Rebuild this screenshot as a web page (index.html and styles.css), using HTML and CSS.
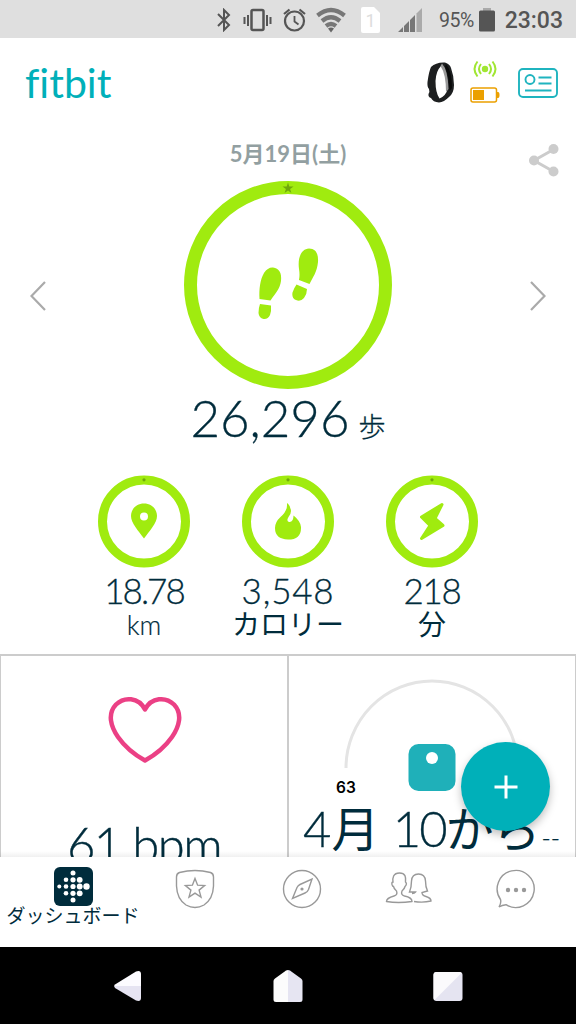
FILE: index.html
```
<!DOCTYPE html>
<html lang="ja">
<head>
  <meta charset="UTF-8">
  <meta name="viewport" content="width=device-width, initial-scale=1.0">
  <title>Fitbit</title>
  <link rel="stylesheet" href="styles.css">
</head>
<body>
  <div class="status-bar">
    <svg class="s-bt" width="14" height="24" viewBox="0 0 14 24" fill="none" stroke="#555" stroke-width="2"><path d="M1 6L12 17L7 22V2L12 7L1 18"/></svg>
    <svg class="s-vib" width="29" height="24" viewBox="0 0 29 24" fill="none" stroke="#555" stroke-width="2"><rect x="8.500" y="2" width="12" height="20" rx="1.500" stroke-width="2.500"/><path d="M1.500 9v7M5 7v11M24 7v11M27.500 9v7"/></svg>
    <svg class="s-alarm" width="23" height="24" viewBox="0 0 23 24" fill="none" stroke="#555" stroke-width="2.200"><circle cx="11.500" cy="13" r="9.500"/><path d="M1 6L6.500 1.500M22 6L16.500 1.500"/><path d="M11.500 8v5.500l4 3" stroke-width="1.800"/></svg>
    <svg class="s-wifi" width="30" height="26" viewBox="0 0 30 26" fill="none" stroke="#777" stroke-width="4.300"><path d="M1.500 8.500Q15-2.500 28.500 8.500"/><path d="M6 14Q15 6.500 24 14"/><path d="M10 19Q15 15 20 19"/><path d="M12 21.500Q15 19.500 18 21.500L15 25.500z" fill="#666" stroke="none"/></svg>
    <svg class="s-sim" width="19" height="26" viewBox="0 0 19 26"><path d="M2 0h11l6 6v18q0 2-2 2H2q-2 0-2-2V2q0-2 2-2z" fill="#fff"/><text x="9.500" y="20" text-anchor="middle" class="sim-num">1</text></svg>
    <svg class="s-signal" width="24" height="24" viewBox="0 0 24 24" fill="#777"><path d="M0 24L5 19v5zM6 18l5-5v11H6zM12 12l5-5v17h-5z"/><path d="M18.500 5.500L24 0v24h-5.500z" fill="#aaa"/></svg>
    <span class="s-percent">95%</span>
    <svg class="s-battery" width="16" height="24" viewBox="0 0 16 24"><path d="M4 0h8v3H4z" fill="#aaa"/><rect y="2.500" width="16" height="21" rx="1.500" fill="#555"/></svg>
    <span class="s-clock">23:03</span>
  </div>

  <div class="dashboard">
    <div class="header">
      <div class="logo">fitbit</div>
      <svg class="device" width="28" height="41" viewBox="0 0 28 41"><path fill-rule="evenodd" d="M4 5Q9 0 18 .5Q23 2 24 6Q27 14 27 23Q27 31 22 35Q17 40 12 40.500Q6 40 4 36Q1 35 1.500 32Q3 30 2 27Q0 25 .5 20Q2 9 4 5zM14 4Q9 9 8.500 19Q8.500 31 12.500 36.500Q19 34 21 26Q20 10 14 4z" fill="#1d1f20"/><path d="M15 1.500Q21 8 21.500 27L19 30Q19 12 13.500 4z" fill="#999"/><path d="M19 2Q25 9 25 26L22.500 29Q22 14 18 5z" fill="#090a0a"/></svg>
      <div class="sync">
        <svg width="24" height="18" viewBox="0 0 24 18" fill="none" stroke="#a0e632" stroke-width="2"><circle cx="12" cy="9" r="3.200" fill="#a0e632" stroke="none"/><path d="M4.500 1.500Q-1.500 9 4.500 16.500M8 4Q4 9 8 14M19.500 1.500Q25.500 9 19.500 16.500M16 4Q20 9 16 14"/></svg>
        <svg width="30" height="16" viewBox="0 0 30 16"><rect x="1" y="1" width="25.500" height="14" rx="2" fill="none" stroke="#eba000" stroke-width="1.500"/><rect x="3" y="3" width="11" height="10" fill="#eba000"/><path d="M27 5h1q1.500 0 1.500 3T28 11h-1z" fill="#eba000"/></svg>
      </div>
      <svg class="account" width="40" height="30" viewBox="0 0 40 30" fill="none" stroke="#1fb4bf" stroke-width="1.900"><rect x="1" y="1" width="38" height="28" rx="4"/><circle cx="12" cy="11.500" r="4.500"/><path d="M20.500 9.500h13M20.500 15.500h13M7 22.500h26.500"/></svg>
    </div>

    <div class="date-row">
      <span class="date">5月19日(土)</span>
      <svg class="share" width="30" height="33" viewBox="0 0 30 33" fill="#ccc"><path d="M24.500 5.500L5 16.500L24.500 27.500" fill="none" stroke="#ccc" stroke-width="3"/><circle cx="24.500" cy="5" r="5"/><circle cx="5" cy="16.500" r="5"/><circle cx="24.500" cy="27.500" r="5"/></svg>
    </div>

    <div class="steps-row">
      <svg width="16" height="30" viewBox="0 0 16 30" fill="none" stroke="#aaa" stroke-width="2.200"><path d="M15 1L1.500 15L15 29"/></svg>
      <svg width="208" height="208" viewBox="0 0 208 208" fill="#a0eb0f">
        <circle cx="104" cy="104" r="97.500" fill="none" stroke="#a0eb0f" stroke-width="13"/>
        <path d="M104 1.500l1.300 4h4.200l-3.400 2.500l1.300 4l-3.400-2.500l-3.400 2.500l1.300-4l-3.400-2.500h4.200z" fill="#6fa80c"/>
        <path d="M89 86.500C95 87 98 92 97 100C96 108 91 113 86.500 119.500L75.500 118C75 108 76 99 80 92Q84 86 89 86.500zM76 123l11 1.500Q87.500 130 86 134Q84 138.500 79.500 138Q75 137 74.500 132Q74.500 127 76 123z"/>
        <path d="M125 67.500C132 67.500 134.500 73 134 81C133 91 129 96 125.500 103L115 99Q116 94 115 88C113.500 77 117 68 125 67.500zM112.500 103.500l10.500 4.500Q123 113 120 117Q116.500 121 112 119Q107.500 117 108.500 111.500Q110 107 112.500 103.500z"/>
      </svg>
      <svg width="16" height="30" viewBox="0 0 16 30" fill="none" stroke="#aaa" stroke-width="2.200"><path d="M1 1L14.500 15L1 29"/></svg>
    </div>
    <div class="steps">26,296<span class="steps-unit">歩</span></div>

    <div class="goals">
      <div class="goal">
        <svg width="92" height="93" viewBox="0 0 92 93" fill="#a0eb0f"><circle cx="46" cy="46.500" r="41.500" fill="none" stroke="#a0eb0f" stroke-width="9"/><circle cx="46" cy="4.800" r="1.600" fill="#6fa80c"/><path fill-rule="evenodd" d="M46 28.500C53.500 28.500 59 34 59 41C59 48 51.500 56 46 63.500C40.500 56 33 48 33 41C33 34 38.500 28.500 46 28.500zM46 37.500a4 4 0 1 0 0 8a4 4 0 1 0 0-8z"/></svg>
        <span class="goal-value distance">18.78</span>
        <span class="goal-unit latin">km</span>
      </div>
      <div class="goal">
        <svg width="92" height="93" viewBox="0 0 92 93" fill="#a0eb0f"><circle cx="46" cy="46.500" r="41.500" fill="none" stroke="#a0eb0f" stroke-width="9"/><circle cx="46" cy="4.800" r="1.600" fill="#6fa80c"/><path d="M45.500 28Q48.500 31 49 36Q49 39 46.500 42Q44 46 47 47Q51.500 47.500 51.500 40.500Q58.500 46 59 52Q59.500 64.500 46 64.500Q33 64 33 53Q33 47 38.500 42Q45.500 36 45 29z"/></svg>
        <span class="goal-value calories">3,548</span>
        <span class="goal-unit">カロリー</span>
      </div>
      <div class="goal">
        <svg width="92" height="93" viewBox="0 0 92 93" fill="#a0eb0f"><circle cx="46" cy="46.500" r="41.500" fill="none" stroke="#a0eb0f" stroke-width="9"/><circle cx="46" cy="4.800" r="1.600" fill="#6fa80c"/><path d="M56 29.500L35.500 42L44 50.500L35.500 63.500L57 50.500L49 43.500z" stroke="#a0eb0f" stroke-width="3" stroke-linejoin="round"/></svg>
        <span class="goal-value">218</span>
        <span class="goal-unit">分</span>
      </div>
    </div>

    <div class="tiles">
      <div class="tile heart-tile">
        <svg width="74" height="68" viewBox="0 0 74 68" fill="none" stroke="#eb4085" stroke-width="4.500" stroke-linejoin="round"><path d="M37 13.500C30.500 1 16 .5 8 8.500C-1 18 3 31 10 41C17 51 27 59 37 64.500C47 59 57 51 64 41C71 31 75 18 66 8.500C58 .5 43.500 1 37 13.500z"/></svg>
        <div class="tile-value">61 bpm</div>
      </div>
      <div class="tile weight-tile">
        <svg width="176" height="114" viewBox="0 0 176 114"><path d="M2 89A86 87 0 0 1 174 89" fill="none" stroke="#e4e4e4" stroke-width="3"/><rect x="64.500" y="65" width="47" height="47" rx="10" fill="#1fb0b9"/><circle cx="88" cy="79" r="6" fill="#fff"/></svg>
        <span class="weight-start">63</span>
        <div class="weight-value">4<b class="kanji">月</b> <span class="ten">10</span><b class="kana">から</b><span class="dash">--</span></div>
      </div>
    </div>
    <div class="fab"><svg width="24" height="24" viewBox="0 0 24 24" stroke="#fff" stroke-width="3"><path d="M12 .5v23M.5 12h23"/></svg></div>
  </div>

  <div class="tab-bar">
    <div class="tab active">
      <svg width="39" height="39" viewBox="0 0 39 39" fill="#fff"><rect width="39" height="39" rx="6" fill="#002c3c"/><circle cx="19" cy="6" r="2.500"/><circle cx="12" cy="12.800" r="2.300"/><circle cx="19" cy="12.800" r="2.600"/><circle cx="25.700" cy="12.800" r="2.900"/><circle cx="5.300" cy="19.500" r="2"/><circle cx="12" cy="19.500" r="2.300"/><circle cx="19" cy="19.500" r="2.600"/><circle cx="25.700" cy="19.500" r="2.900"/><circle cx="32.500" cy="19.500" r="3.200"/><circle cx="12" cy="26.300" r="2.300"/><circle cx="19" cy="26.300" r="2.600"/><circle cx="25.700" cy="26.300" r="2.900"/><circle cx="19" cy="33" r="2.500"/></svg>
      <span>ダッシュボード</span>
    </div>
    <div class="tab"><svg width="40" height="40" viewBox="0 0 40 40"><path d="M4.500 3.500Q20-.5 35.500 3.500Q38.500 4.500 38.500 8V17Q38 30 29 36Q20 41 11 36Q2 30 1.500 17V8Q1.500 4.500 4.500 3.500z"/><path d="M20 9.500l2.600 6.700l7 .4l-5.500 4.500l1.900 7l-6-4l-6 4l1.900-7l-5.500-4.500l7-.4z"/></svg></div>
    <div class="tab"><svg width="40" height="40" viewBox="0 0 40 40"><circle cx="20" cy="20" r="18.500"/><path d="M30 10L26.500 20.500Q25.500 23 23 24L10.500 29.500L15 18.500Q16 16.500 18 15.500z"/><circle cx="20" cy="20" r="1.600" class="dot"/></svg></div>
    <div class="tab"><svg width="48" height="40" viewBox="0 0 48 40"><path d="M14.500 4C8 4 7.500 9 8 13Q6.500 13 7 15.500Q7.500 17.500 8.500 17.500Q9 20 11.500 22Q13 26 9 27Q1.500 29 1.500 32.500Q13 34.500 27 32.500Q27 28.500 19.500 27Q15.500 26 17 22Q19.500 20 20 17.500Q22.500 15 20.500 13C21 8 20.500 4 14.500 4z"/><path d="M27 24.500Q29.500 24.500 30.500 23H24.500Q26.500 18 26.500 12Q27 5 33.500 5Q40 5 40.500 12Q40.500 18 42.500 22L37 23.500Q37 26.500 41 27.500Q46 29 46 32Q38 34 29 32.500"/></svg></div>
    <div class="tab"><svg width="40" height="40" viewBox="0 0 40 40"><path d="M4.500 30.500A18.500 18.500 0 1 1 10 35.700Q6 36 3 38Q5.500 34 4.500 30.500z"/><g class="dot"><circle cx="12" cy="21" r="2.200"/><circle cx="20" cy="21" r="2.200"/><circle cx="28" cy="21" r="2.200"/></g></svg></div>
  </div>

  <div class="nav-bar">
    <svg width="30" height="32" viewBox="0 0 30 32"><path d="M2 14.500L23 1.500Q28 0 28 4V16H1z" fill="#fcfbff"/><path d="M1 16H28V28Q28 32 23 30.500L2 18z" fill="#e6e4f2"/></svg>
    <svg width="30" height="32" viewBox="0 0 30 32"><path d="M15 0Q13 0 11 2L2 8.500Q.5 9.500 .5 11V29.500Q.5 32 3 32H15z" fill="#fcfcfc"/><path d="M15 0Q17 0 19 2L28 8.500Q29.500 9.500 29.500 11V29.500Q29.500 32 27 32H15z" fill="#e6e5f2"/></svg>
    <svg width="30" height="32" viewBox="0 0 30 32"><rect x=".5" y="2" width="29" height="29" rx="3" fill="#e5e4f1"/><path d="M28.500 3L1.500 30Q.5 29.500 .5 28V5Q.5 2 3.500 2H26Q28 2 28.500 3z" fill="#fbfafc"/></svg>
  </div>
</body>
</html>
```
FILE: styles.css
```
* {
  box-sizing: border-box;
}
body {
  margin: 0;
  width: 576px;
  height: 1024px;
  display: flex;
  flex-direction: column;
  overflow: hidden;
  background: #fff;
  color: #002c3c;
  font-family: Lato, "Noto Sans CJK JP", sans-serif;
}
svg {
  display: block;
  flex-shrink: 0;
}

/* status bar */
.status-bar {
  height: 38px;
  padding: 2px 13px 0 217px;
  display: flex;
  align-items: center;
  background: #dfdfdf;
  color: #555;
  font-family: Roboto, sans-serif;
}
.s-vib {
  margin-left: 12px;
}
.s-alarm {
  margin-left: 11px;
}
.s-wifi {
  margin-left: 10px;
}
.s-sim {
  margin-left: 15px;
}
.sim-num {
  font-size: 18px;
  fill: #ddd;
}
.s-signal {
  margin-left: 18px;
}
.s-percent {
  width: 40px;
  margin-left: 17px;
  font-size: 19.5px;
  letter-spacing: -0.5px;
}
.s-battery {
  margin-left: 1px;
}
.s-clock {
  margin-left: 10px;
  font-size: 23px;
  font-weight: 500;
}

/* dashboard */
.dashboard {
  position: relative;
  height: 819px;
  overflow: hidden;
}
.dashboard::after {
  content: "";
  position: absolute;
  left: 0;
  right: 0;
  bottom: 0;
  height: 6px;
  background: linear-gradient(rgba(0,0,0,0), rgba(0,0,0,0.06));
}
.header {
  height: 90px;
  padding: 0 18px 0 25px;
  display: flex;
  align-items: center;
}
.logo {
  flex: 1;
  color: #00b0b9;
  font-size: 41px;
  line-height: 50px;
  font-variant-ligatures: none;
}
.device {
  margin-bottom: 2px;
}
.sync {
  width: 30px;
  margin: 0 18px 3px 15px;
  display: flex;
  flex-direction: column;
  align-items: center;
  gap: 9px;
}
.date-row {
  height: 53px;
  padding: 0 17px;
  display: grid;
  grid-template-columns: 1fr auto 1fr;
  align-items: center;
}
.date {
  grid-column: 2;
  padding-bottom: 5px;
  color: #929fa1;
  font-size: 22px;
  font-weight: bold;
}
.share {
  justify-self: end;
  margin-top: 11px;
}
.steps-row {
  height: 208px;
  padding: 0 30px;
  display: flex;
  align-items: center;
  justify-content: space-between;
}
.steps-row svg:first-child,
.steps-row svg:last-child {
  margin-top: 21px;
}
.steps {
  height: 86px;
  line-height: 58px;
  text-align: center;
  font-size: 51px;
  font-weight: 300;
  -webkit-text-stroke: 0.3px;
}
.steps-unit {
  margin-left: 9px;
  font-size: 27px;
}
.goals {
  height: 179px;
  padding: 0 72px;
  display: grid;
  grid-template-columns: repeat(3, 1fr);
}
.goal {
  display: flex;
  flex-direction: column;
  align-items: center;
}
.goal-value {
  height: 44px;
  line-height: 44px;
  font-size: 35px;
  font-weight: 300;
  letter-spacing: -1.3px;
  -webkit-text-stroke: 0.3px;
}
.goal-value.distance {
  letter-spacing: -2px;
}
.goal-value.calories {
  letter-spacing: 0.8px;
}
.goal-unit {
  height: 26px;
  line-height: 24px;
  font-size: 28px;
}
.goal-unit.latin {
  font-size: 27px;
  font-weight: 300;
  line-height: 26px;
  -webkit-text-stroke: 0.2px;
}

/* tiles */
.tiles {
  display: grid;
  grid-template-columns: 288px 1fr;
  height: 260px;
  border: 1px solid #ccc;
  border-top-width: 2px;
}
.tile {
  display: flex;
  flex-direction: column;
  align-items: center;
}
.heart-tile {
  padding-top: 40px;
  border-right: 2px solid #ccc;
}
.heart-tile svg {
  margin-left: 2px;
}
.tile-value {
  margin-top: 50px;
  line-height: 60px;
  font-size: 49px;
  font-weight: 300;
  letter-spacing: -1.6px;
  -webkit-text-stroke: 0.4px;
}
.weight-tile {
  padding-top: 23px;
}
.weight-tile svg {
  margin-left: -1px;
}
.weight-start {
  align-self: flex-start;
  margin: -14px 0 0 47px;
  height: 18px;
  line-height: 18px;
  color: #000;
  font-family: Inter, sans-serif;
  font-size: 15.5px;
  font-weight: 600;
}
.weight-value {
  align-self: flex-start;
  padding-left: 14px;
  line-height: 62px;
  white-space: nowrap;
  font-size: 49px;
  font-weight: 300;
  -webkit-text-stroke: 0.3px;
}
.kanji, .kana {
  font-weight: 400;
  font-size: 48px;
  -webkit-text-stroke: 0;
}
.ten {
  letter-spacing: -2px;
}
.kana {
  letter-spacing: -1px;
}
.dash {
  margin-left: 2px;
  font-size: 25px;
}
.fab {
  position: absolute;
  left: 461px;
  top: 704px;
  width: 89px;
  height: 89px;
  display: flex;
  align-items: center;
  justify-content: center;
  border-radius: 50%;
  background: #00b0b9;
  box-shadow: 0 4px 9px rgba(0,0,0,0.25);
}

/* bottom bars */
.tab-bar {
  height: 90px;
  display: grid;
  grid-template-columns: 146px repeat(4, 107px);
}
.tab {
  padding: 12px 10px 0 0;
  display: flex;
  flex-direction: column;
  align-items: center;
}
.tab svg {
  fill: none;
  stroke: #999;
  stroke-width: 1.4;
}
.tab .dot {
  fill: #999;
  stroke: none;
}
.tab.active {
  padding: 10px 0 0;
}
.tab.active svg {
  fill: #fff;
  stroke: none;
}
.tab.active span {
  font-size: 19px;
  line-height: 20px;
  white-space: nowrap;
}
.nav-bar {
  height: 77px;
  padding: 0 113px;
  display: flex;
  align-items: center;
  justify-content: space-between;
  background: #000;
}
```
